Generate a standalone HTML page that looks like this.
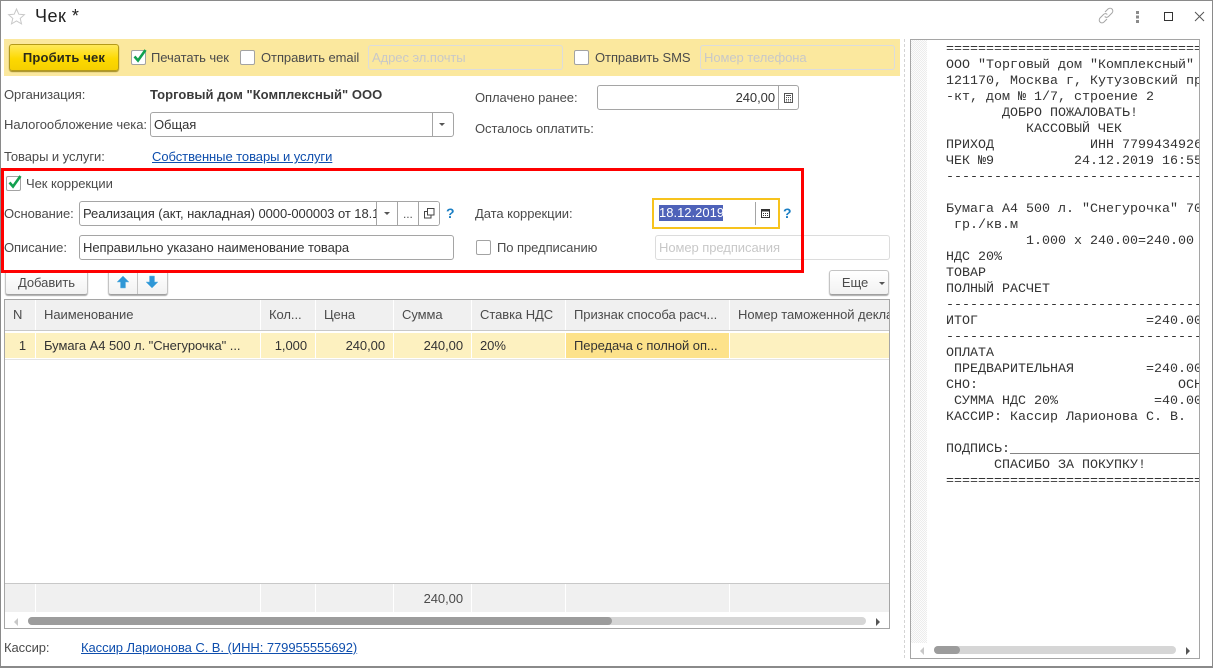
<!DOCTYPE html>
<html><head><meta charset="utf-8"><style>
*{box-sizing:border-box}
html,body{margin:0;padding:0;width:1213px;height:668px;overflow:hidden;background:#fff}
body{position:relative;font-family:"Liberation Sans",Arial,sans-serif;font-size:13px;color:#4b4b4b;letter-spacing:-.06px}
.a{position:absolute;white-space:nowrap}
.t{position:absolute;white-space:nowrap;line-height:16px}
.d{color:#333}
.f{position:absolute;border:1px solid #a5a5a5;border-radius:3px;background:#fff;height:25px;line-height:23px;padding-left:3px;color:#333;white-space:nowrap;overflow:hidden}
.ph{border:1px solid #dcdcdc;color:#c8c8c8;background:transparent}
.sep{position:absolute;top:0;bottom:0;width:1px;background:#a5a5a5}
.cb{position:absolute;width:15px;height:15px;border:1px solid #a3a3a3;border-radius:2px;background:#fff}
.lnk{position:absolute;white-space:nowrap;line-height:16px;color:#0e4ead;text-decoration:underline}
.btn{position:absolute;border:1px solid #c4c4c4;border-bottom:1px solid #a0a0a0;border-radius:3px;background:linear-gradient(#fff,#f2f2f2);box-shadow:0 1px 1px #aaa;text-align:center;color:#4b4b4b}
.q{position:absolute;color:#1b7fc4;font-weight:bold;font-size:14px;letter-spacing:0;line-height:16px}
.h{position:absolute;background:#f0f0f0;padding-left:8px;white-space:nowrap;overflow:hidden;color:#4b4b4b}
.c{position:absolute;top:333px;height:25px;background:#fdf1c0;line-height:25px;padding:0 8px;white-space:nowrap;color:#333}
.s{position:absolute;height:28px;background:#f0f0f0}
.r{text-align:right}
#rc{position:absolute;left:946px;top:42px;width:253px;height:460px;overflow:hidden;font-family:"Liberation Mono",monospace;font-size:13.33px;line-height:16px;color:#333;letter-spacing:0;white-space:pre}
</style></head><body>
<!-- window -->
<div class="a" style="left:0;top:0;width:1213px;height:668px;border:1px solid #8a8a8a;border-width:1px 1px 2px 1px"></div>
<svg class="a" style="left:7px;top:7px" width="20" height="20" viewBox="0 0 20 20"><path d="M9.500 2l2.300 5.200 5.600.5-4.200 3.700 1.300 5.500-5-2.900-5 2.900 1.300-5.500L1.600 7.700l5.600-.5z" fill="none" stroke="#c8c8c8"/></svg>
<div class="a" style="left:35px;top:4px;font-size:18px;line-height:24px;color:#222;letter-spacing:.5px">Чек *</div>
<svg class="a" style="left:1096px;top:6px" width="20" height="20" viewBox="0 0 20 20"><g fill="none" stroke="#a5a5a5" stroke-width="1"><path d="M9 6l3-3c1.300-1.100 3-1 4 0s1.200 2.800 0 4l-3.500 3.500c-1.200 1.100-2.800 1.100-3.800 0"/><path d="M11 13l-3 3c-1.300 1.200-3 1-4 0s-1.100-2.800 0-4l3.500-3.500c1.200-1.100 2.800-1.100 3.800 0"/></g></svg>
<svg class="a" style="left:1135px;top:10px" width="6" height="14"><g fill="#8a8a8a"><rect x="1" y="1" width="3" height="3"/><rect x="1" y="5.500" width="3" height="3"/><rect x="1" y="10" width="3" height="3"/></g></svg>
<div class="a" style="left:1164px;top:12px;width:9px;height:9px;border:1px solid #333"></div>
<svg class="a" style="left:1194px;top:11px" width="12" height="12"><path d="M1 1l9 9M10 1l-9 9" stroke="#555" fill="none"/></svg>

<!-- yellow bar -->
<div class="a" style="left:4px;top:39px;width:896px;height:37px;background:#fbe89e"></div>
<div class="a" style="left:9px;top:44px;width:110px;height:27px;border:1px solid #b49a1a;border-radius:3px;background:linear-gradient(#ffe95a,#fdd900 55%,#f5cf00);box-shadow:0 1px 1px #a08a20;text-align:center;line-height:25px;font-weight:bold;color:#2a2a1a;font-size:13px;letter-spacing:.15px">Пробить чек</div>
<div class="cb" style="left:131px;top:50px"></div>
<svg class="a" style="left:131px;top:46px" width="18" height="18"><path d="M3.500 10.500l3.500 4L14.500 4" fill="none" stroke="#13a14f" stroke-width="2.600"/></svg>
<div class="t" style="left:151px;top:50px">Печатать чек</div>
<div class="cb" style="left:240px;top:50px"></div>
<div class="t" style="left:261px;top:50px">Отправить email</div>
<div class="f ph" style="left:368px;top:45px;width:195px;height:25px">Адрес эл.почты</div>
<div class="cb" style="left:574px;top:50px"></div>
<div class="t" style="left:595px;top:50px">Отправить SMS</div>
<div class="f ph" style="left:700px;top:45px;width:195px;height:25px">Номер телефона</div>

<!-- org -->
<div class="t" style="left:4px;top:87px">Организация:</div>
<div class="t" style="left:150px;top:87px;font-weight:bold;color:#3a3a3a;letter-spacing:.03px">Торговый дом "Комплексный" ООО</div>
<div class="t" style="left:4px;top:117px">Налогообложение чека:</div>
<div class="f" style="left:150px;top:112px;width:304px">Общая<div class="sep" style="left:281px"></div><div class="a" style="left:288px;top:10px;width:0;height:0;border:3px solid transparent;border-top:3px solid #555"></div></div>
<div class="t" style="left:4px;top:149px">Товары и услуги:</div>
<div class="lnk" style="left:152px;top:149px">Собственные товары и услуги</div>
<div class="t" style="left:475px;top:90px">Оплачено ранее:</div>
<div class="f" style="left:597px;top:85px;width:202px;text-align:right;padding-right:23px">240,00<div class="sep" style="left:180px"></div>
<svg class="a" style="left:185px;top:6px" width="11" height="12"><rect x="1.500" y="1.500" width="8" height="9" fill="none" stroke="#555"/><path d="M3 3.500h5" stroke="#555"/><path d="M3 5.500h5M3 7.500h5M3 9h5" stroke="#555" stroke-dasharray="1 1"/></svg></div>
<div class="t" style="left:475px;top:121px">Осталось оплатить:</div>

<!-- correction -->
<div class="cb" style="left:6px;top:176px"></div>
<svg class="a" style="left:6px;top:172px" width="18" height="18"><path d="M3.500 10.500l3.500 4L14.500 4" fill="none" stroke="#13a14f" stroke-width="2.600"/></svg>
<div class="t" style="left:26px;top:176px">Чек коррекции</div>
<div class="t" style="left:4px;top:206px">Основание:</div>
<div class="f" style="left:79px;top:201px;width:361px">Реализация (акт, накладная) 0000-000003 от 18.1
<div class="a" style="left:296px;top:0;width:64px;height:23px;background:#fff"></div>
<div class="sep" style="left:296px"></div><div class="a" style="left:304px;top:10px;width:0;height:0;border:3px solid transparent;border-top:3px solid #555"></div>
<div class="sep" style="left:317px"></div><div class="a" style="left:323px;top:1px;font-size:12px;color:#555">...</div>
<div class="sep" style="left:338px"></div>
<svg class="a" style="left:344px;top:6px" width="11" height="11"><path d="M3.500 .5h6.500v6.500h-6.500z M3.500 3.500h-3v6.500h6.500v-3" fill="none" stroke="#444"/></svg></div>
<div class="q" style="left:446px;top:205px">?</div>
<div class="t" style="left:4px;top:240px">Описание:</div>
<div class="f" style="left:79px;top:235px;width:375px">Неправильно указано наименование товара</div>
<div class="t" style="left:475px;top:206px">Дата коррекции:</div>
<div class="a" style="left:652px;top:198px;width:128px;height:31px;border:2px solid #f7c31d;background:#fff"></div>
<div class="a" style="left:659px;top:205px;width:64px;height:16px;background:#4e62b9;color:#fff;line-height:16px;letter-spacing:0">18.12.2019</div>
<div class="a" style="left:755px;top:202px;width:1px;height:23px;background:#a5a5a5"></div>
<svg class="a" style="left:760px;top:207px" width="11" height="12"><rect x="1.500" y="2.500" width="8" height="8" fill="none" stroke="#333"/><path d="M1 3.500h9" stroke="#333" stroke-width="2"/><path d="M3 6.500h5M3 8.500h5" stroke="#333" stroke-dasharray="1 1"/></svg>
<div class="q" style="left:783px;top:205px">?</div>
<div class="cb" style="left:476px;top:240px"></div>
<div class="t" style="left:497px;top:240px">По предписанию</div>
<div class="f ph" style="left:655px;top:235px;width:235px">Номер предписания</div>

<!-- toolbar -->
<div class="btn" style="left:5px;top:270px;width:83px;height:25px;line-height:23px">Добавить</div>
<div class="btn" style="left:108px;top:270px;width:60px;height:25px"></div>
<div class="a" style="left:137px;top:270px;width:1px;height:24px;background:#c4c4c4"></div>
<svg class="a" style="left:116px;top:275px" width="14" height="14"><path d="M7 1l6 6H9.500v6h-5V7H1z" fill="#2f97d6" stroke="#6ab7e3" stroke-width=".5"/></svg>
<svg class="a" style="left:145px;top:275px" width="14" height="14"><path d="M7 13L1 7h3.500V1h5v6H13z" fill="#2f97d6" stroke="#6ab7e3" stroke-width=".5"/></svg>
<div class="btn" style="left:829px;top:270px;width:60px;height:25px;line-height:23px;padding-right:8px;text-align:center">Еще<div class="a" style="left:49px;top:11px;width:0;height:0;border:3px solid transparent;border-top:3px solid #555"></div></div>
<div class="a" style="left:1px;top:168px;width:803px;height:105px;border:3px solid #fe0000"></div>

<!-- table -->
<div class="a" style="left:4px;top:299px;width:886px;height:330px;border:1px solid #a5a5a5;background:#fff"></div>
<div class="h" style="left:5px;top:300px;width:30px;height:30px;line-height:29px">N</div>
<div class="h" style="left:36px;top:300px;width:224px;height:30px;line-height:29px">Наименование</div>
<div class="h" style="left:261px;top:300px;width:54px;height:30px;line-height:29px">Кол...</div>
<div class="h" style="left:316px;top:300px;width:77px;height:30px;line-height:29px">Цена</div>
<div class="h" style="left:394px;top:300px;width:77px;height:30px;line-height:29px">Сумма</div>
<div class="h" style="left:472px;top:300px;width:93px;height:30px;line-height:29px">Ставка НДС</div>
<div class="h" style="left:566px;top:300px;width:163px;height:30px;line-height:29px">Признак способа расч...</div>
<div class="h" style="left:730px;top:300px;width:159px;height:30px;line-height:29px">Номер таможенной декларации</div>
<div class="a" style="left:5px;top:330px;width:884px;height:1px;background:#c8c8c8"></div>
<div class="c r" style="left:5px;width:30px;padding-right:9px">1</div>
<div class="c" style="left:36px;width:224px">Бумага А4 500 л. "Снегурочка" ...</div>
<div class="c r" style="left:261px;width:54px">1,000</div>
<div class="c r" style="left:316px;width:77px">240,00</div>
<div class="c r" style="left:394px;width:77px">240,00</div>
<div class="c" style="left:472px;width:93px">20%</div>
<div class="c" style="left:566px;width:163px;background:#fde28a">Передача с полной оп...</div>
<div class="c" style="left:730px;width:159px"></div>
<div class="a" style="left:5px;top:359px;width:884px;height:1px;background:#e4e4e4"></div>
<div class="a" style="left:5px;top:583px;width:884px;height:1px;background:#c8c8c8"></div>
<div class="s" style="left:5px;top:584px;width:30px"></div>
<div class="s" style="left:36px;top:584px;width:224px"></div>
<div class="s" style="left:261px;top:584px;width:54px"></div>
<div class="s" style="left:316px;top:584px;width:77px"></div>
<div class="s r" style="left:394px;top:584px;width:77px;line-height:29px;padding-right:8px">240,00</div>
<div class="s" style="left:472px;top:584px;width:93px"></div>
<div class="s" style="left:566px;top:584px;width:163px"></div>
<div class="s" style="left:730px;top:584px;width:159px"></div>
<div class="a" style="left:14px;top:618px;width:0;height:0;border:4px solid transparent;border-right:4px solid #c8c8c8;border-left:none"></div>
<div class="a" style="left:28px;top:617px;width:838px;height:8px;background:#d6d6d6;border-radius:4px"></div>
<div class="a" style="left:28px;top:617px;width:584px;height:8px;background:#9c9c9c;border-radius:4px"></div>
<div class="a" style="left:876px;top:618px;width:0;height:0;border:4px solid transparent;border-left:4px solid #555;border-right:none"></div>

<!-- cashier -->
<div class="t" style="left:4px;top:640px">Кассир:</div>
<div class="lnk" style="left:81px;top:640px">Кассир Ларионова С. В. (ИНН: 779955555692)</div>

<!-- splitter -->
<div class="a" style="left:904px;top:39px;height:619px;border-left:1px dashed #d4d4d4"></div>

<!-- receipt panel -->
<div class="a" style="left:910px;top:39px;width:290px;height:620px;border:1px solid #a5a5a5;background:#fff"></div>
<div class="a" style="left:911px;top:40px;width:16px;height:603px;background-image:repeating-conic-gradient(#ececec 0 25%,#fcfcfc 0 50%);background-size:2px 2px"></div>
<div id="rc">========================================
ООО "Торговый дом "Комплексный" ООО
121170, Москва г, Кутузовский проспе
-кт, дом № 1/7, строение 2
       ДОБРО ПОЖАЛОВАТЬ!
          КАССОВЫЙ ЧЕК
ПРИХОД            ИНН 7799434926
ЧЕК №9          24.12.2019 16:55
----------------------------------------

Бумага А4 500 л. "Снегурочка" 70
 гр./кв.м
          1.000 x 240.00=240.00
НДС 20%
ТОВАР
ПОЛНЫЙ РАСЧЕТ
----------------------------------------
ИТОГ                     =240.00
----------------------------------------
ОПЛАТА
 ПРЕДВАРИТЕЛЬНАЯ         =240.00
СНО:                         ОСН
 СУММА НДС 20%            =40.00
КАССИР: Кассир Ларионова С. В.

ПОДПИСЬ:________________________________
      СПАСИБО ЗА ПОКУПКУ!
========================================</div>
<div class="a" style="left:920px;top:647px;width:0;height:0;border:4px solid transparent;border-right:4px solid #c8c8c8;border-left:none"></div>
<div class="a" style="left:934px;top:646px;width:242px;height:8px;background:#d6d6d6;border-radius:4px"></div>
<div class="a" style="left:934px;top:646px;width:26px;height:8px;background:#9c9c9c;border-radius:4px"></div>
<div class="a" style="left:1186px;top:647px;width:0;height:0;border:4px solid transparent;border-left:4px solid #555;border-right:none"></div>
</body></html>
